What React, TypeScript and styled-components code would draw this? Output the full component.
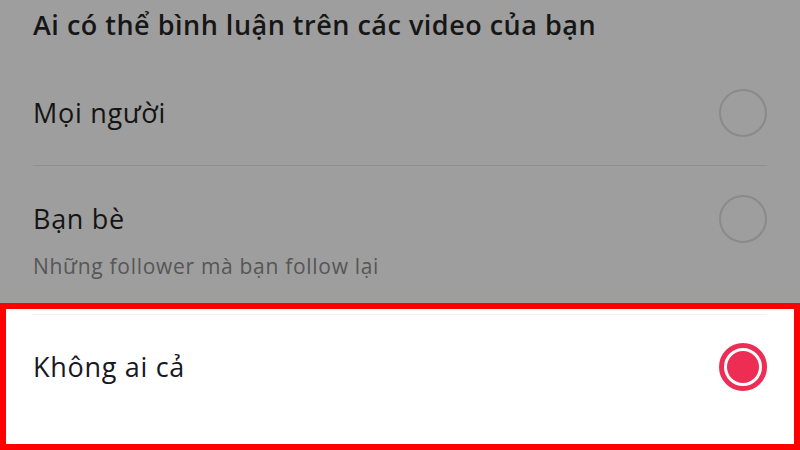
import styled, { createGlobalStyle } from "styled-components";

const GlobalStyle = createGlobalStyle`
	html, body {
		margin: 0;
		padding: 0;
		background: #9e9e9e;
	}

	body {
		font-family: "Open Sans", "Noto Sans", sans-serif;
		-webkit-font-smoothing: antialiased;
	}
`;

const Screen = styled.div`
	width: 800px;
	height: 450px;
	overflow: hidden;
	display: flex;
	flex-direction: column;
	background: #9e9e9e;
`;

const DimmedSection = styled.div`
	display: flex;
	flex-direction: column;
	padding: 0 33px;
`;

const Title = styled.h2`
	margin: 8px 0 0;
	font-size: 27px;
	line-height: 34px;
	font-weight: 600;
	letter-spacing: 0.5px;
	color: #161616;
	height: 52px;
`;

const OptionRow = styled.div<{ divided?: boolean }>`
	display: flex;
	flex-direction: column;
	justify-content: center;
	border-bottom: ${props => props.divided ? "1px solid #8f8f8f" : "none"};
`;

const OptionLine = styled.div`
	display: flex;
	flex-direction: row;
	justify-content: space-between;
	align-items: center;
`;

const OptionLabel = styled.span<{ dim?: boolean }>`
	font-size: 27px;
	line-height: 34px;
	letter-spacing: 0.7px;
	color: ${props => props.dim ? "#141414" : "#161823"};
`;

const OptionHint = styled.span`
	font-size: 21px;
	line-height: 26px;
	letter-spacing: 0.7px;
	color: #565656;
	margin-top: 10px;
`;

const Radio = styled.span<{ checked?: boolean }>`
	box-sizing: border-box;
	width: 48px;
	height: 48px;
	border-radius: 50%;
	border: ${props => props.checked ? "5px solid #ee2d55" : "2.5px solid #8a8a8a"};
	display: flex;
	align-items: center;
	justify-content: center;

	&::after {
		content: "";
		display: ${props => props.checked ? "block" : "none"};
		width: 32px;
		height: 32px;
		border-radius: 50%;
		background: #ee2d55;
	}
`;

const FirstOption = styled(OptionRow)`
	height: 105px;
`;

const SecondOption = styled(OptionRow)`
	padding: 29px 0 24px;
`;

// the highlighted choice, boxed in red
const HighlightFrame = styled.div`
	flex: 1;
	box-sizing: border-box;
	border: 6px solid #ff0000;
	background: #ffffff;
	padding: 5px 27px 0 26px;
	display: flex;
	flex-direction: column;
`;

const SelectedOption = styled.div`
	border-top: 1px solid #f1f1f3;
	padding: 28px 0 0 1px;
`;

export default function App() {
	return (
		<Screen>
			<GlobalStyle />
			<DimmedSection>
				<Title>Ai có thể bình luận trên các video của bạn</Title>
				<FirstOption divided>
					<OptionLine>
						<OptionLabel dim>Mọi người</OptionLabel>
						<Radio />
					</OptionLine>
				</FirstOption>
				<SecondOption>
					<OptionLine>
						<OptionLabel dim>Bạn bè</OptionLabel>
						<Radio />
					</OptionLine>
					<OptionHint>Những follower mà bạn follow lại</OptionHint>
				</SecondOption>
			</DimmedSection>
			<HighlightFrame>
				<SelectedOption>
					<OptionLine>
						<OptionLabel>Không ai cả</OptionLabel>
						<Radio checked />
					</OptionLine>
				</SelectedOption>
			</HighlightFrame>
		</Screen>
	);
}
